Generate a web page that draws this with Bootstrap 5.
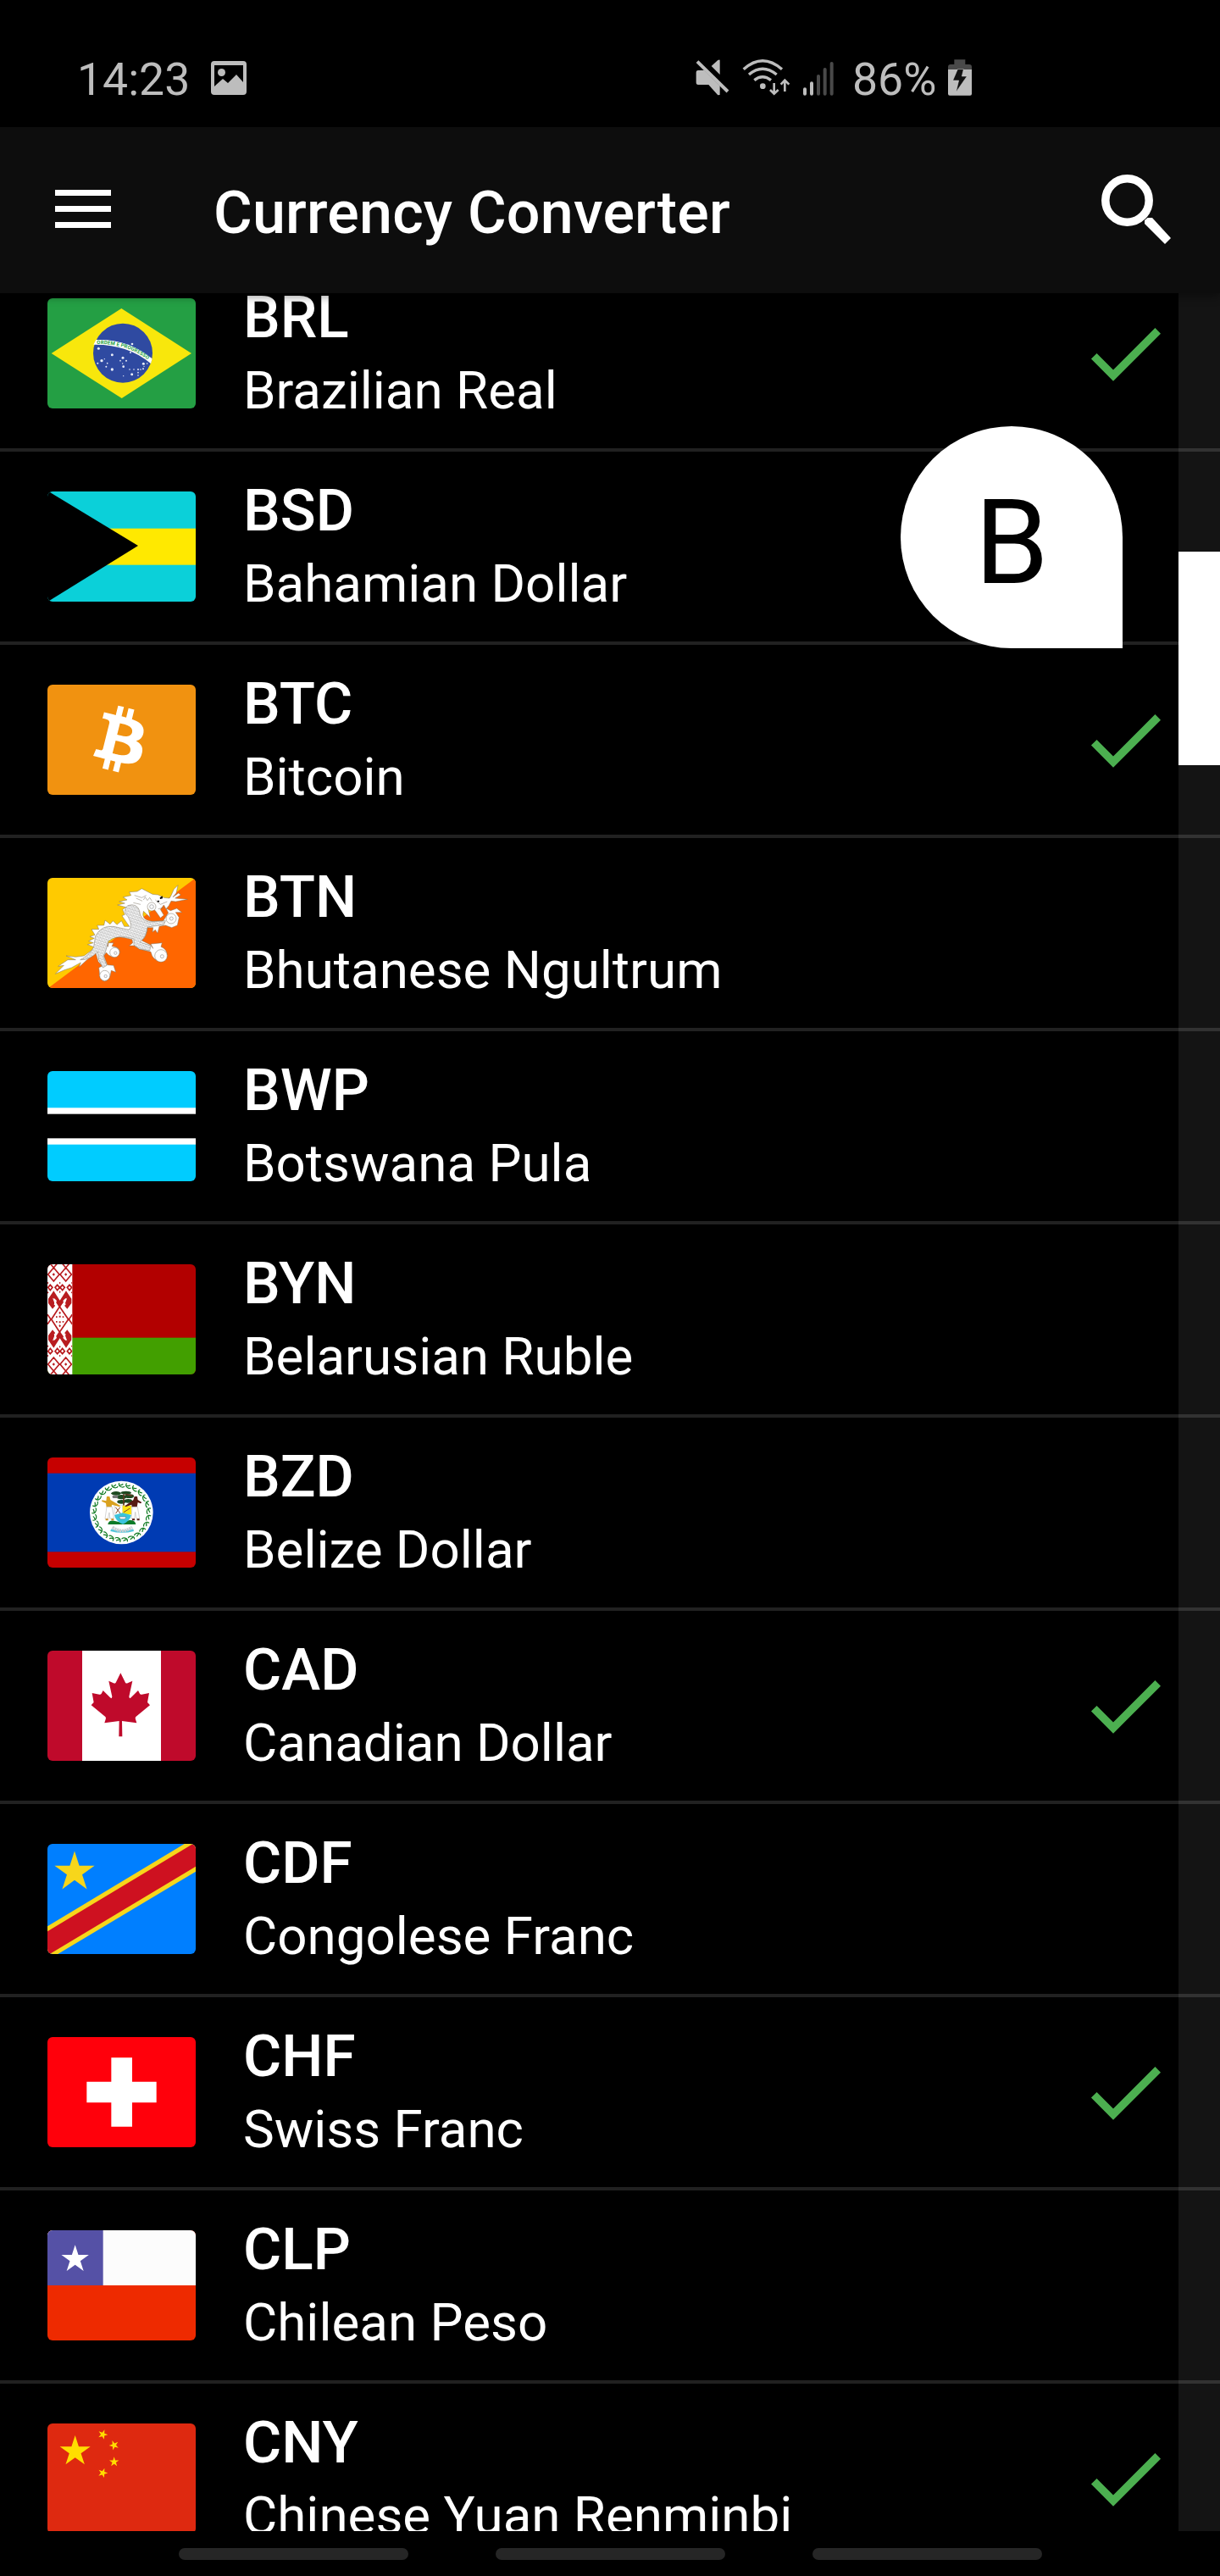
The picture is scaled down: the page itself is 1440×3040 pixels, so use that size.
<!DOCTYPE html>
<html lang="en" data-bs-theme="dark">
<head>
<meta charset="utf-8">
<meta name="viewport" content="width=device-width, initial-scale=1">
<title>Currency Converter</title>
<link href="https://cdn.jsdelivr.net/npm/bootstrap@5.3.0/dist/css/bootstrap.min.css" rel="stylesheet">
<style>
  body { background: #000; color: #fff; font-family: Roboto, "Liberation Sans", sans-serif; }
  svg { display: block; flex: none; }
  .screen { width: 1440px; height: 3040px; background: #000; }
  .status-bar { height: 150px; padding: 0 292px 37px 91px; color: #bdbdbd; font-size: 53.5px; line-height: 1; }
  .status-text { height: 49px; line-height: 60px; white-space: nowrap; }
  .app-bar { height: 196px; background: #0d0d0d; padding: 0 58px 3px 65px; box-shadow: 0 4px 10px rgba(0,0,0,.4); z-index: 3; }
  .app-title { font-size: 70px; font-weight: 500; line-height: 82px; letter-spacing: .2px; margin-left: 121px; padding-top: 9px; }
  .currency-pane { height: 2641px; }
  .currency-list { margin-top: -41px; }
  .currency-item { height: 228px; border-bottom: 4px solid #212121; padding: 0 56px; }
  .flag { width: 175px; height: 130px; border-radius: 6px; }
  .labels { margin-left: 56px; padding-bottom: 3px; }
  .code { font-size: 69.3px; font-weight: 500; line-height: 82px; }
  .full-name { font-size: 61.9px; line-height: 74px; margin-top: 8px; white-space: nowrap; }
  .track { width: 49px; background: rgba(255,255,255,.08); }
  .thumb { height: 252px; margin-top: 305px; }
  .bubble { left: 1063px; top: 157px; width: 262px; height: 262px; border-radius: 131px 131px 0 131px; background: #fff; color: #000; font-size: 140px; line-height: 275px; z-index: 2; }
  .nav-hints { height: 53px; gap: 103px; padding-top: 20px; }
  .pill { width: 271px; height: 14px; border-radius: 7px; background: #262626; }
</style>
</head>
<body>

<svg width="0" height="0" class="position-absolute" aria-hidden="true">
  <defs>
    <path id="star" d="M0-1 .2245-.309H.951L.363.118.588.809 0 .382-.588.809-.363.118-.951-.309H-.2245Z"/>
    <path id="leaf" d="M-8-10Q-12 2 2 5 8 6 11 2M-6-2Q0-1 6-6" fill="none" stroke="#0f7a22" stroke-width="3.600"/>
    <symbol id="check" viewBox="0 0 24 24"><path fill="#4caf50" d="M9 16.17 4.83 12l-1.42 1.41L9 19 21 7l-1.41-1.41z"/></symbol>
    <pattern id="scales" width="11" height="10" patternUnits="userSpaceOnUse" patternTransform="rotate(18)">
      <rect width="11" height="10" fill="#fff"/>
      <path d="M0 0H11M0 5H11M2 0V5M8 5V10" stroke="#8b8b8b" stroke-width="1.3"/>
    </pattern>
    <g id="ornament">
      <g fill="none" stroke="#b81c1f" stroke-width="5">
        <path d="M22 12 42 36 22 60 2 36ZM65 12 85 36 65 60 45 36ZM22 12 10-2M22 12 34-2M65 12 53-2M65 12 77-2"/>
        <path d="M10 73 18 82 10 92 2 82ZM35 73 43 82 35 92 27 82ZM53 73 61 82 53 92 45 82ZM78 73 86 82 78 92 70 82Z"/>
        <path d="M43 150 14 195M43 150 74 195M0 178 12 195M88 178 76 195M43 150 20 115M43 150 66 115"/>
      </g>
      <path fill="#b81c1f" d="M22 94 44 128 66 94 85 122V138L70 158 60 146 70 118 44 150 18 118 28 146 18 158 3 138V122Z"/>
      <path fill="none" stroke="#fff" stroke-width="5" d="M22 122 30 130 26 142 38 152M66 122 58 130 62 142 50 152"/>
      <path fill="#b81c1f" d="M22 31l5 5-5 5-5-5zM65 31l5 5-5 5-5-5zM41 66l3-4 3 4-3 4zM41 98l3-4 3 4-3 4zM0 62l5 4-5 4zM88 62l-5 4 5 4zM0 96l5 4-5 4zM88 96l-5 4 5 4zM40 172l4-5 4 5-4 5zM30 184h5v5h-5zM53 184h5v5h-5zM41 182h6v6h-6z"/>
    </g>
  </defs>
</svg>

<main class="screen d-flex flex-column overflow-hidden">
  <div class="status-bar d-flex align-items-end flex-shrink-0">
    <div class="status-text" style="width:150px">14:23</div>
    <svg class="ms-2" width="42" height="41" viewBox="0 0 42 41"><path fill="#bdbdbd" fill-rule="evenodd" d="M4 0H38Q42 0 42 4V36Q42 40 38 40H4Q0 40 0 36V4Q0 0 4 0ZM4 5V30L14 21 20 26 30 16 38 25V5Z"/><circle cx="12.500" cy="13.500" r="4.500" fill="#bdbdbd"/></svg>
    <svg class="ms-auto" width="40" height="43" viewBox="33 30 120 129"><g fill="#bdbdbd"><path d="M119 33V84L89 54 111 34Q118 29 119 33ZM42 69H64L119 124V156L112 157 79 120H42Q35 120 35 112V77Q35 69 42 69Z"/></g><path d="M34 34 149 150" stroke="#000" stroke-width="22" transform="translate(8 -7)"/><path d="M39 38 147 144" stroke="#bdbdbd" stroke-width="12"/></svg>
    <svg width="57" height="44" viewBox="198 27 171 132" style="margin-left:15px"><g fill="none" stroke="#bdbdbd" stroke-width="10"><path d="M203 65Q270 5 339 65M222 84Q270 43 320 84M241 104Q270 81 300 104"/><path d="M311 114V150M297 138 311 152 326 138M349 144V106M335 119 349 104 364 119" stroke-width="8"/></g><circle cx="271" cy="125" r="10" fill="#bdbdbd"/></svg>
    <svg width="38" height="41" viewBox="411 36 114 123" style="margin-left:14px"><g stroke-width="12" stroke-linecap="round"><path stroke="#bdbdbd" d="M420 136V152M444 115V152"/><path stroke="#494949" d="M468 90V152M491 66V152M515 45V152"/></g></svg>
    <div class="status-text" style="margin-left:21px;width:112px">86%</div>
    <svg width="30" height="44" viewBox="924 27 90 132"><path fill="#494949" d="M927 66V57Q927 48 936 48H949V31H988V48H1002Q1011 48 1011 57V66Z"/><path fill="#bdbdbd" d="M927 66H1011V152Q1011 158 1005 158H933Q927 158 927 152Z"/><path fill="#111" stroke="#ddd" stroke-width="1.500" d="M961 65H982L976 90H994L955 146 965 105H944Z"/></svg>
  </div>

  <header class="app-bar d-flex align-items-center flex-shrink-0 position-relative">
    <svg width="66" height="46" viewBox="0 0 66 46"><path d="M0 3.500H66M0 22.500H66M0 41.500H66" stroke="#fff" stroke-width="7"/></svg>
    <h1 class="app-title mb-0">Currency Converter</h1>
    <svg class="ms-auto" width="82" height="82" viewBox="1300 206 82 82"><circle cx="1330.500" cy="236.500" r="25.700" fill="none" stroke="#fff" stroke-width="9.500"/><path fill="#fff" d="M1354.500 257H1360L1382 281 1375 288 1351 264V260Z"/></svg>
  </header>

  <section class="currency-pane d-flex flex-shrink-0 overflow-hidden position-relative">
    <div class="currency-list w-100">
      <div class="currency-item d-flex align-items-center">
        <svg class="flag" viewBox="0 0 525 390"><rect width="525" height="390" fill="#249f44"/><path fill="#f8e70c" d="M14 195 262 36 510 195 263 354Z"/><circle cx="267" cy="194" r="105" fill="#2f4aa1"/><path fill="#fff" d="M172 147Q285 142 371 214L366 231Q285 162 163 164Z"/><path id="motto" fill="none" d="M175 162Q285 160 364 224"/><text font-size="18" font-weight="700" fill="#249f44"><textPath href="#motto" textLength="192">ORDEM E PROGRESSO</textPath></text><g fill="#e8edf8"><circle cx="181" cy="178" r="4.500"/><circle cx="229" cy="200" r="4.500"/><circle cx="267" cy="211" r="4.500"/><circle cx="192" cy="221" r="5"/><circle cx="229" cy="252" r="5"/><circle cx="269" cy="242" r="4"/><circle cx="299" cy="269" r="4.500"/><circle cx="340" cy="232" r="4.500"/><circle cx="300" cy="162" r="4"/><circle cx="178" cy="230" r="3"/><circle cx="212" cy="230" r="2.500"/><circle cx="208" cy="242" r="3"/><circle cx="202" cy="215" r="2"/><circle cx="258" cy="221" r="2.500"/><circle cx="279" cy="221" r="3"/><circle cx="266" cy="231" r="2"/><circle cx="294" cy="192" r="3"/><circle cx="291" cy="252" r="2.500"/><circle cx="306" cy="252" r="2.500"/><circle cx="321" cy="252" r="3"/><circle cx="330" cy="252" r="2.500"/><circle cx="339" cy="250" r="3"/><circle cx="321" cy="263" r="2.500"/><circle cx="321" cy="273" r="2.500"/><circle cx="342" cy="241" r="2"/><circle cx="353" cy="231" r="2.500"/><circle cx="269" cy="275" r="2"/></g></svg>
        <div class="labels"><div class="code">BRL</div><div class="full-name">Brazilian Real</div></div>
        <svg class="ms-auto" width="112" height="112"><use href="#check"/></svg>
      </div>
      <div class="currency-item d-flex align-items-center">
        <svg class="flag" viewBox="0 0 525 390"><rect width="525" height="390" fill="#0bd0d9"/><rect y="131" width="525" height="129" fill="#ffe900"/><path d="M0 0H4L321 192 5 388 0 390Z"/></svg>
        <div class="labels"><div class="code">BSD</div><div class="full-name">Bahamian Dollar</div></div>
      </div>
      <div class="currency-item d-flex align-items-center">
        <svg class="flag" viewBox="0 0 525 390"><rect width="525" height="390" fill="#f19210"/><path fill="#fff" transform="translate(65.300 2.800) scale(11.860)" d="M23.189 14.02c.314-2.096-1.283-3.223-3.465-3.975l.708-2.84-1.728-.43-.69 2.765c-.454-.114-.92-.22-1.385-.326l.695-2.783L15.596 6l-.708 2.839c-.376-.086-.746-.17-1.104-.26l.002-.009-2.384-.595-.46 1.846s1.283.294 1.256.312c.7.175.826.638.805 1.006l-.806 3.235c.048.012.11.03.18.057l-.183-.045-1.13 4.532c-.086.212-.303.531-.793.41.018.025-1.256-.313-1.256-.313l-.858 1.978 2.25.561c.418.105.828.215 1.231.318l-.715 2.872 1.727.43.708-2.84c.472.127.93.245 1.378.357l-.706 2.828 1.728.43.715-2.866c2.948.558 5.164.333 6.097-2.333.752-2.146-.037-3.385-1.588-4.192 1.13-.26 1.98-1.003 2.207-2.538zm-3.95 5.538c-.533 2.147-4.148.986-5.32.695l.95-3.805c1.172.293 4.929.872 4.37 3.11zm.535-5.569c-.487 1.953-3.495.96-4.47.717l.86-3.45c.975.243 4.118.696 3.61 2.733z"/></svg>
        <div class="labels"><div class="code">BTC</div><div class="full-name">Bitcoin</div></div>
        <svg class="ms-auto" width="112" height="112"><use href="#check"/></svg>
      </div>
      <div class="currency-item d-flex align-items-center">
        <svg class="flag" viewBox="0 0 525 390"><rect width="525" height="390" fill="#ffca00"/><path fill="#f60" d="M3 390 525 0V390Z"/>
          <g fill="#fff" stroke="#7d7565" stroke-width="1.500">
            <path d="M28 340 58 310 38 313 72 290 100 290 66 276 100 280 130 276 165 250 175 262 140 290 112 316 118 300 85 318 60 326Z"/>
            <path d="M165 245 142 236 163 230 146 224 166 214 150 208 168 202 156 182 182 182 176 168 200 168 204 150 222 164 232 152 246 166 262 152 272 172 290 172 Q268 140 264 134L274 130 266 112 278 104 248 96 274 90 254 84 282 78 268 68 296 62 290 50 318 48 334 38 372 58 392 60 412 70 432 72 438 62 448 40 462 26 456 54 444 68 464 54 472 60 452 72 496 76 454 84 438 82 430 98 420 110 412 96 400 112 412 132 400 142 382 116 366 104 356 108 364 140 340 118Q330 150 372 154L410 152 428 124 420 108 436 116 458 108 476 122 454 122 466 140 460 168 440 176 418 168 396 172 390 196 382 184 372 192 374 176 354 176Q352 206 334 222L366 238 374 250 366 234 406 230 402 244Q424 252 424 276 418 296 400 296 372 292 366 262L326 252 308 240 290 240 302 230 300 218Q252 204 226 212L206 230 214 244 216 230 234 230 228 242Q256 244 256 264 248 280 230 280 216 276 208 264L200 276 212 308 234 310 242 334 226 328Q222 364 202 366 182 360 184 334L182 318 194 312 180 296Z"/>
            <path fill="url(#scales)" d="M116 290Q150 274 164 244L170 206Q192 166 234 172L288 184Q304 172 286 138 264 118 284 98 316 88 326 116 326 146 358 156L418 152 412 166 354 174Q350 208 328 228L366 240 362 258 326 252 306 238 306 216Q248 198 216 224L206 260 198 278 210 310 196 318 182 290 178 262Q150 292 116 290Z"/>
            <circle cx="203" cy="346" r="18"/><circle cx="238" cy="264" r="17"/><circle cx="402" cy="276" r="22"/><circle cx="438" cy="144" r="18"/><circle cx="369" cy="102" r="15"/>
            <path fill="none" d="M308 62 334 70 350 62M314 72 336 82M304 88 330 94M382 78 400 94 424 84M392 110 416 104M340 78 346 68 354 80 362 70 370 82"/>
          </g>
          <path d="M398 70l9-6 1 9-9 2zM390 80l7 1-3 5-6-1z"/><g fill="none" stroke="#888" stroke-width="1.800"><circle cx="206" cy="348" r="5"/><circle cx="241" cy="266" r="5"/><circle cx="406" cy="278" r="6"/><circle cx="439" cy="144" r="6"/><circle cx="369" cy="102" r="7"/></g></svg>
        <div class="labels"><div class="code">BTN</div><div class="full-name">Bhutanese Ngultrum</div></div>
      </div>
      <div class="currency-item d-flex align-items-center">
        <svg class="flag" viewBox="0 0 525 390"><rect width="525" height="390" fill="#0cf"/><rect y="130" width="525" height="130" fill="#fff"/><rect y="152" width="525" height="86"/></svg>
        <div class="labels"><div class="code">BWP</div><div class="full-name">Botswana Pula</div></div>
      </div>
      <div class="currency-item d-flex align-items-center">
        <svg class="flag" viewBox="0 0 525 390"><rect width="525" height="390" fill="#b20000"/><rect y="260" width="525" height="130" fill="#429f00"/><rect width="88" height="390" fill="#fff"/><svg width="88" height="390" viewBox="0 0 88 390"><use href="#ornament"/><use href="#ornament" transform="matrix(1 0 0 -1 0 390)"/></svg></svg>
        <div class="labels"><div class="code">BYN</div><div class="full-name">Belarusian Ruble</div></div>
      </div>
      <div class="currency-item d-flex align-items-center">
        <svg class="flag" viewBox="0 0 525 390"><rect width="525" height="390" fill="#c60000"/><rect y="56" width="525" height="278" fill="#003bb3"/><circle cx="262" cy="195" r="112" fill="#fff"/><g id="wreath"></g>
          <g fill="#1d4a20"><ellipse cx="243" cy="127" rx="17" ry="7"/><ellipse cx="278" cy="125" rx="19" ry="6"/><ellipse cx="262" cy="140" rx="18" ry="8"/><ellipse cx="290" cy="137" rx="16" ry="7"/><ellipse cx="262" cy="157" rx="15" ry="7"/><ellipse cx="286" cy="154" rx="14" ry="7"/></g><path d="M270 130V170M276 130l25 5" stroke="#5d3620" stroke-width="5"/><rect x="230" y="134" width="20" height="10" rx="4" fill="#777"/>
          <path fill="#0b7a28" d="M214 237Q216 222 236 224L262 230 290 222Q310 220 313 237Z"/>
          <path fill="#fff" stroke="#999" d="M237 170H266V202H237Z"/><path fill="#fce312" d="M266 170H297V202H266Z"/><path fill="#3bc4dd" d="M237 204 266 196 297 204Q292 226 267 236 241 226 237 204Z"/><path d="M241 176 258 198M257 176 242 198M270 194 292 180" stroke="#8a4a27" stroke-width="3"/><path d="M254 210H279L274 218H258Z" fill="#fff" stroke="#567" stroke-width="1.500"/>
          <path fill="#d9a11f" d="M210 138l10 0 3 12 34 20-1 5-28-8-1 9h-18l-2-14-15-7 2-4 14 3z"/><path fill="#571a14" d="M308 138h10l2 12 14 9-4 4-10-4-3 17h-18l-1-9-22 8-1-4 29-20z"/><path fill="#fff" stroke="#aaa" stroke-width="1.500" d="M210 175H229L235 216H221L219 195 214 217H204ZM300 175H319L326 216H315L311 193 308 217H297Z"/><path stroke="#c98d22" stroke-width="6" d="M206 220h9M226 220h9"/><path stroke="#571a14" stroke-width="6" d="M300 220h9M317 220h9"/>
          <path fill="none" stroke="#52c6dc" stroke-width="8" d="M224 257Q264 268 305 257"/><path fill="none" stroke="#c9ced2" stroke-width="11" stroke-dasharray="7 2" d="M230 247Q264 272 300 247"/></svg>
        <div class="labels"><div class="code">BZD</div><div class="full-name">Belize Dollar</div></div>
      </div>
      <div class="currency-item d-flex align-items-center">
        <svg class="flag" viewBox="0 0 525 390"><rect width="525" height="390" fill="#bf0a2b"/><rect x="123" width="279" height="390" fill="#fff"/><path fill="#bf0a2b" d="M259 79 276 113Q279 117 284 115L301 107 289 163Q290 172 296 166L321 141 327 152Q329 156 334 155L360 150 355 178Q353 184 357 186L363 193 313 234Q310 237 312 243L316 256 264 249 265 304H253L254 249 202 256 206 243Q208 237 205 234L155 193 161 186Q165 184 163 178L158 150 184 155Q189 156 191 152L197 141 222 166Q228 172 229 163L217 107 234 115Q239 117 242 113Z"/></svg>
        <div class="labels"><div class="code">CAD</div><div class="full-name">Canadian Dollar</div></div>
        <svg class="ms-auto" width="112" height="112"><use href="#check"/></svg>
      </div>
      <div class="currency-item d-flex align-items-center">
        <svg class="flag" viewBox="0 0 525 390"><rect width="525" height="390" fill="#007fff"/><path fill="#f7d61b" d="M0 292 485 0H525V98L37 390H0Z"/><path fill="#ce1120" d="M0 310 515 0H525V80L8 390H0Z"/><use href="#star" fill="#f7d61b" transform="translate(96 100) scale(74.500)"/></svg>
        <div class="labels"><div class="code">CDF</div><div class="full-name">Congolese Franc</div></div>
      </div>
      <div class="currency-item d-flex align-items-center">
        <svg class="flag" viewBox="0 0 525 390"><rect width="525" height="390" fill="#ff000b"/><path fill="#fff" d="M226 73H300V158H386V232H300V317H226V232H139V158H226Z"/></svg>
        <div class="labels"><div class="code">CHF</div><div class="full-name">Swiss Franc</div></div>
        <svg class="ms-auto" width="112" height="112"><use href="#check"/></svg>
      </div>
      <div class="currency-item d-flex align-items-center">
        <svg class="flag" viewBox="0 0 525 390"><rect width="525" height="390" fill="#ee2a00"/><rect width="525" height="195" fill="#fcfcfc"/><rect width="197" height="195" fill="#5551a6"/><use href="#star" fill="#fff" transform="translate(98 103) scale(51)"/></svg>
        <div class="labels"><div class="code">CLP</div><div class="full-name">Chilean Peso</div></div>
      </div>
      <div class="currency-item d-flex align-items-center">
        <svg class="flag" viewBox="0 0 525 390"><rect width="525" height="390" fill="#de2910"/><g fill="#ffde00"><use href="#star" transform="translate(98 99) scale(57)"/><use href="#star" transform="translate(196 39) rotate(20) scale(18)"/><use href="#star" transform="translate(236 77) rotate(-22) scale(18)"/><use href="#star" transform="translate(236 136) scale(18)"/><use href="#star" transform="translate(196 175) rotate(20) scale(18)"/></g></svg>
        <div class="labels"><div class="code">CNY</div><div class="full-name">Chinese Yuan Renminbi</div></div>
        <svg class="ms-auto" width="112" height="112"><use href="#check"/></svg>
      </div>
    </div>
    <div class="track position-absolute top-0 end-0 h-100 overflow-hidden"><div class="thumb bg-white"></div></div>
    <div class="bubble position-absolute text-center">B</div>
  </section>

  <nav class="nav-hints d-flex justify-content-center flex-shrink-0" aria-label="Gesture hints">
    <div class="pill"></div><div class="pill"></div><div class="pill"></div>
  </nav>
</main>

<script src="https://cdn.jsdelivr.net/npm/bootstrap@5.3.0/dist/js/bootstrap.bundle.min.js"></script>
<script>
  const wreath = document.getElementById("wreath");
  for (let i = 0; i < 25; i++) {
    const leaf = document.createElementNS("http://www.w3.org/2000/svg", "use");
    leaf.setAttribute("href", "#leaf");
    leaf.setAttribute("transform", `translate(262 195) rotate(${i * 14.4}) translate(0 -95)`);
    wreath.appendChild(leaf);
  }
</script>
</body>
</html>
